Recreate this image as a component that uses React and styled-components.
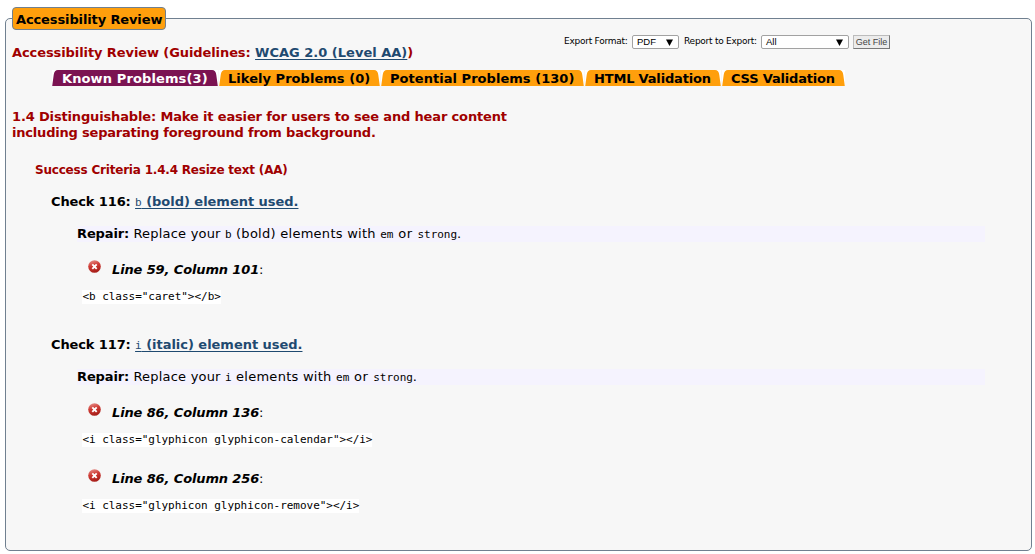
import React from "react";
import styled, { createGlobalStyle } from "styled-components";

const Global = createGlobalStyle`
  * { box-sizing: border-box; }
  html, body { margin: 0; background: #fff; }
  body { font: 13px/16px Verdana, "DejaVu Sans", sans-serif; color: #000; overflow: hidden; }
`;

const Page = styled.div`
  width: 1035px;
  height: 554px;
  padding: 7px 3px 3px 5px;
`;

const Panel = styled.fieldset`
  position: relative;
  width: 1027px;
  height: 544px;
  margin: 0;
  padding: 0 6px;
  min-width: 0;
  border: 1px solid #708090;
  border-radius: 5px;
  background: #f7f7f7;
`;

const Legend = styled.legend`
  width: 154px;
  height: 23px;
  padding: 0 0 0 3px;
  border: 1px solid #708090;
  border-radius: 4px;
  background: #ff9f0c;
  font-weight: bold;
  line-height: 23px;
  white-space: nowrap;
`;

const Fit = styled.span`
  letter-spacing: ${(p) => p.$ls || 0}px;
  white-space: nowrap;
`;

const TopRow = styled.div`
  display: flex;
  height: 40px;
`;

const Title = styled.h2`
  width: 552px;
  margin: 0;
  padding-top: 15px;
  color: #a00000;
  font-size: 13px;
  white-space: nowrap;
`;

const Link = styled.a`
  color: #1f4a70;
  font-weight: bold;
  letter-spacing: ${(p) => p.$ls || 0}px;
  text-decoration: underline;
  text-decoration-thickness: 1px;
  text-underline-offset: 2px;
  text-decoration-skip-ink: none;
`;

const ExportForm = styled.form`
  display: flex;
  align-items: flex-start;
  height: 20px;
  padding-top: 5px;
  font-size: 9px;
`;

const Label = styled.label`
  width: ${(p) => p.$w}px;
  line-height: 12px;
  white-space: nowrap;
`;

const Select = styled.div`
  display: flex;
  justify-content: space-between;
  align-items: center;
  width: ${(p) => p.$w}px;
  height: 14px;
  margin-right: ${(p) => p.$gap}px;
  padding: 0 5px 0 4px;
  border: 1px solid #a2a2a2;
  border-radius: 2px;
  background: #fff;
  font: 9.5px/12px Arial, "Liberation Sans", sans-serif;
`;

const FileButton = styled.button`
  width: 37px;
  height: 14px;
  padding: 0;
  border: 1px solid;
  border-color: #bcbcbc #777 #777 #bcbcbc;
  background: #ececec;
  color: #444;
  font: 9px/12px Arial, "Liberation Sans", sans-serif;
  white-space: nowrap;
`;

const Tabs = styled.nav`
  display: flex;
  gap: 1px;
  height: 16px;
  margin: 0 0 23px 40px;
`;

const Tab = styled.div`
  display: flex;
  width: ${(p) => p.$w}px;
  height: 16px;
  background: #fff;
  color: ${(p) => (p.$active ? "#fff" : "#000")};
  fill: ${(p) => (p.$active ? "#7b1352" : "#ff9f0c")};
  font-weight: bold;
  line-height: 18px;
  white-space: nowrap;
`;

const TabBody = styled.span`
  flex: 1;
  height: 16px;
  padding-left: ${(p) => (p.$active ? 4 : 3)}px;
  background: ${(p) => (p.$active ? "#7b1352" : "#ff9f0c")};
`;

const Guideline = styled.h3`
  margin: 0 0 21px;
  color: #a00000;
  font-size: 13px;
  line-height: 16px;
`;

const Criterion = styled.h4`
  margin: 0 0 16px 23px;
  color: #a00000;
  font-size: 12px;
  line-height: 16px;
`;

const Check = styled.section`
  margin: 0 0 ${(p) => p.$after || 0}px 39px;
`;

const CheckTitle = styled.h5`
  height: 16px;
  margin: 0 0 16px;
  font-size: 13px;
  line-height: 16px;
`;

const Repair = styled.p`
  width: 908px;
  height: 16px;
  margin: 0 0 20px 26px;
  background: #f5f3fe;
  white-space: nowrap;
`;

const Code = styled.code`
  font: normal 11px/14px "DejaVu Sans Mono", monospace;
  letter-spacing: -0.02px;
`;

const Problem = styled.div`
  margin: 0 0 ${(p) => p.$after || 0}px 31px;
`;

const ProblemLine = styled.div`
  display: flex;
  height: 16px;
  margin-bottom: 12px;
  padding-left: 5px;
`;

const ErrorSvg = styled.svg`
  width: 14px;
  height: 14px;
  margin: -2px 11px 0 0;
`;

const Source = styled.pre`
  width: max-content;
  height: 14px;
  margin: 0;
  padding: 0 0 0 0.4px;
  background: #fff;
  font: 11px/14px "DejaVu Sans Mono", monospace;
  letter-spacing: -0.03px;
`;

const ErrorIcon = () => (
  <ErrorSvg viewBox="0 0 14 14">
    <defs>
      <linearGradient id="ball" x1="0" y1="0" x2="0.3" y2="1">
        <stop offset="0" stopColor="#e9a09b" />
        <stop offset="0.5" stopColor="#cf3a33" />
        <stop offset="1" stopColor="#a9201b" />
      </linearGradient>
    </defs>
    <circle cx="7.5" cy="6.5" r="6.3" fill="url(#ball)" />
    <path d="M5.3 4.4l4.4 4.4M9.7 4.4L5.3 8.8" stroke="#fff" strokeWidth="1.9" />
  </ErrorSvg>
);

const tabs = [
  ["Known Problems(3)", 166, 0.12],
  ["Likely Problems (0)", 161, 0.04],
  ["Potential Problems (130)", 203, 0.04],
  ["HTML Validation", 136, -0.18],
  ["CSS Validation", 123, -0.18],
];

const checks = [
  {
    id: 116, tag: "b", rest: " (bold) element used.", repair: " (bold) elements with ", after: 33,
    problems: [["Line 59, Column 101", '<b class="caret"></b>']],
  },
  {
    id: 117, tag: "i", rest: " (italic) element used.", repair: " elements with ", after: 0,
    problems: [
      ["Line 86, Column 136", '<i class="glyphicon glyphicon-calendar"></i>'],
      ["Line 86, Column 256", '<i class="glyphicon glyphicon-remove"></i>'],
    ],
  },
];

const Arrow = () => (
  <svg width="7" height="7" viewBox="0 0 7 7"><path d="M0 0.5h7L3.5 7z" /></svg>
);

export default function App() {
  return (
    <Page>
      <Global />
      <Panel>
        <Legend><Fit $ls={-0.12}>Accessibility Review</Fit></Legend>
        <TopRow>
          <Title>
            <Fit $ls={-0.09}>Accessibility Review (Guidelines: <Link $ls={0.01}>WCAG 2.0 (Level AA)</Link>)</Fit>
          </Title>
          <ExportForm>
            <Label $w={68}><Fit $ls={-0.25}>Export Format:</Fit></Label>
            <Select $w={47} $gap={5}>PDF <Arrow /></Select>
            <Label $w={77}><Fit $ls={-0.25}>Report to Export:</Fit></Label>
            <Select $w={88} $gap={4}>All <Arrow /></Select>
            <FileButton type="button">Get File</FileButton>
          </ExportForm>
        </TopRow>
        <Tabs>
          {tabs.map(([label, w, ls], i) => (
            <Tab key={label} $w={w} $active={i === 0}>
              <svg width="6" height="16"><path d="M0.2 16L1.7 5Q2.3 0 6 0V16z" /></svg>
              <TabBody $active={i === 0}><Fit $ls={ls}>{label}</Fit></TabBody>
              <svg width="6" height="16"><path d="M5.8 16L4.3 5Q3.7 0 0 0V16z" /></svg>
            </Tab>
          ))}
        </Tabs>
        <Guideline>
          <Fit $ls={-0.15}>1.4 Distinguishable: Make it easier for users to see and hear content</Fit><br />
          <Fit $ls={-0.2}>including separating foreground from background.</Fit>
        </Guideline>
        <Criterion><Fit $ls={-0.2}>Success Criteria 1.4.4 Resize text (AA)</Fit></Criterion>
        {checks.map((c) => (
          <Check key={c.id} $after={c.after}>
            <CheckTitle>
              <Fit $ls={-0.12}>Check {c.id}: </Fit>
              <Link $ls={-0.03}><Code>{c.tag}</Code>{c.rest}</Link>
            </CheckTitle>
            <Repair>
              <Fit $ls={-0.12}><b>Repair:</b></Fit>
              <Fit $ls={0.2}> Replace your </Fit>
              <Code>{c.tag}</Code>
              <Fit $ls={0.27}>{c.repair}</Fit>
              <Code>em</Code>
              <Fit $ls={0.6}> or </Fit>
              <Code>strong</Code>.
            </Repair>
            {c.problems.map(([line, source], i) => (
              <Problem key={line} $after={i < c.problems.length - 1 ? 24 : 0}>
                <ProblemLine>
                  <ErrorIcon />
                  <Fit $ls={-0.13}><b><i>{line}</i></b>:</Fit>
                </ProblemLine>
                <Source>{source}</Source>
              </Problem>
            ))}
          </Check>
        ))}
      </Panel>
    </Page>
  );
}
